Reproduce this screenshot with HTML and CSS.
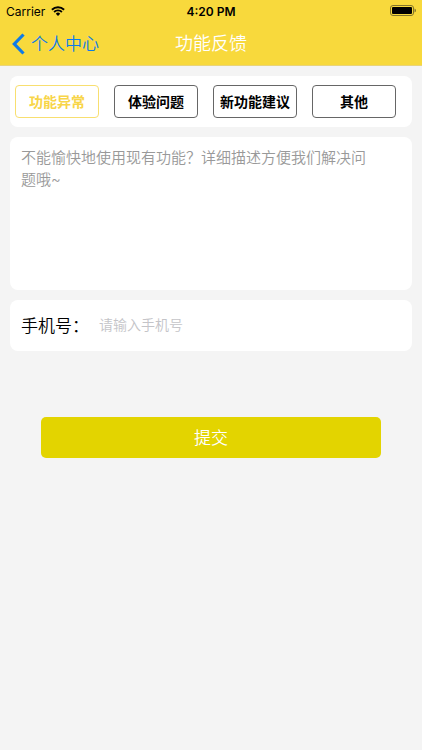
FILE: index.html
```html
<!DOCTYPE html>
<html lang="zh-CN">
<head>
<meta charset="utf-8">
<meta name="viewport" content="width=device-width, initial-scale=1">
<title>功能反馈</title>
<link rel="stylesheet" href="styles.css">
</head>
<body>
<header class="top">
  <div class="status">
    <div class="carrier">
      <span>Carrier</span>
      <svg class="wifi" viewBox="0 0 14 10" aria-hidden="true">
        <path d="M0.9 3.7a8.7 8.7 0 0 1 12.2 0M3.1 6a5.6 5.6 0 0 1 7.8 0" fill="none" stroke="#000" stroke-width="1.9"/>
        <path d="M4.8 7.7a3.1 3.1 0 0 1 4.4 0L7 10z"/>
      </svg>
    </div>
    <span class="time">4:20 PM</span>
    <svg class="battery" viewBox="0 0 26 12" aria-hidden="true">
      <rect x="0.5" y="0.5" width="23" height="10" rx="2.5" fill="none" stroke="#83752b"/>
      <rect x="2" y="2" width="20" height="7" rx="1"/>
      <path d="M24.5 3.500v4q1.500-.7 1.500-2t-1.500-2z" fill="#83752b"/>
    </svg>
  </div>
  <nav class="nav">
    <a class="back" href="#">
      <svg class="chevron" viewBox="0 0 13 22" aria-hidden="true"><path d="M11.500 1.500L2.300 11l9.200 9.500" fill="none" stroke="#0d7be8" stroke-width="3.200"/></svg>
      <span>个人中心</span>
    </a>
    <h1 class="title">功能反馈</h1>
  </nav>
</header>
<main>
  <form class="form">
    <div class="card tabs">
      <button type="button" class="tab active" aria-pressed="true">功能异常</button>
      <button type="button" class="tab" aria-pressed="false">体验问题</button>
      <button type="button" class="tab" aria-pressed="false">新功能建议</button>
      <button type="button" class="tab" aria-pressed="false">其他</button>
    </div>
    <textarea class="card message" aria-label="问题描述" placeholder="不能愉快地使用现有功能？详细描述方便我们解决问题哦~"></textarea>
    <div class="card phone">
      <label for="phone">手机号：</label>
      <input id="phone" type="tel" placeholder="请输入手机号">
    </div>
    <button type="submit" class="submit">提交</button>
  </form>
</main>
</body>
</html>
```
FILE: styles.css
```css
* { box-sizing: border-box; }
body {
  margin: 0;
  background: #f4f4f4;
  color: #000;
  font-family: Inter, "Noto Sans CJK SC", sans-serif;
  font-weight: 350;
}
button, input, textarea { font-family: inherit; font-weight: inherit; }
.top {
  background: #f8d93c;
  border-bottom: 1px solid #e9d47a;
}
.status {
  display: grid;
  grid-template-columns: 1fr auto 1fr;
  align-items: center;
  height: 22px;
  padding: 0 6px;
  font-size: 12px;
  font-weight: 400;
}
.carrier { display: flex; align-items: center; gap: 6px; }
.wifi { width: 14px; height: 10px; }
.time { font-weight: 600; }
.battery { width: 26px; height: 12px; justify-self: end; }
.nav {
  display: grid;
  grid-template-columns: 1fr auto 1fr;
  align-items: center;
  height: 43px;
  padding: 0 12px;
}
.back {
  display: flex;
  align-items: center;
  gap: 6px;
  color: #0d7be8;
  font-size: 17px;
  line-height: 24px;
  text-decoration: none;
}
.chevron { width: 13px; height: 22px; }
.title {
  margin: 0;
  color: #fff;
  font-size: 18px;
  font-weight: inherit;
  line-height: 24px;
}
.form {
  display: flex;
  flex-direction: column;
  gap: 10px;
  padding: 10px;
}
.card {
  border: 0;
  border-radius: 8px;
  background: #fff;
}
.tabs {
  display: grid;
  grid-template-columns: repeat(4, 1fr);
  gap: 15px;
  padding: 9px 16px 9px 5px;
}
.tab {
  height: 33px;
  padding: 0 0 2px;
  border: 1px solid #666;
  border-radius: 4px;
  background: #fff;
  color: #000;
  font-size: 14px;
  font-weight: 700;
}
.tab.active { border-color: #f8df70; color: #f8d548; }
.message {
  display: block;
  width: 100%;
  height: 153px;
  padding: 10px 40px 10px 11px;
  outline: 0;
  resize: none;
  font-size: 15px;
  line-height: 22px;
}
.message::placeholder { color: #999; opacity: 1; }
.phone {
  display: flex;
  align-items: center;
  height: 51px;
  padding: 0 11px 2px;
  gap: 10px;
}
.phone label { font-size: 17px; }
.phone input {
  flex: 1;
  min-width: 0;
  height: 30px;
  padding: 0;
  border: 0;
  outline: 0;
  font-size: 14px;
}
.phone input::placeholder { color: #c4c4c8; opacity: 1; }
.submit {
  height: 41px;
  margin: 56px 31px 0;
  padding: 0 0 2px;
  border: 0;
  border-radius: 5px;
  background: #e3d400;
  color: #fff;
  font-size: 17px;
}
```
